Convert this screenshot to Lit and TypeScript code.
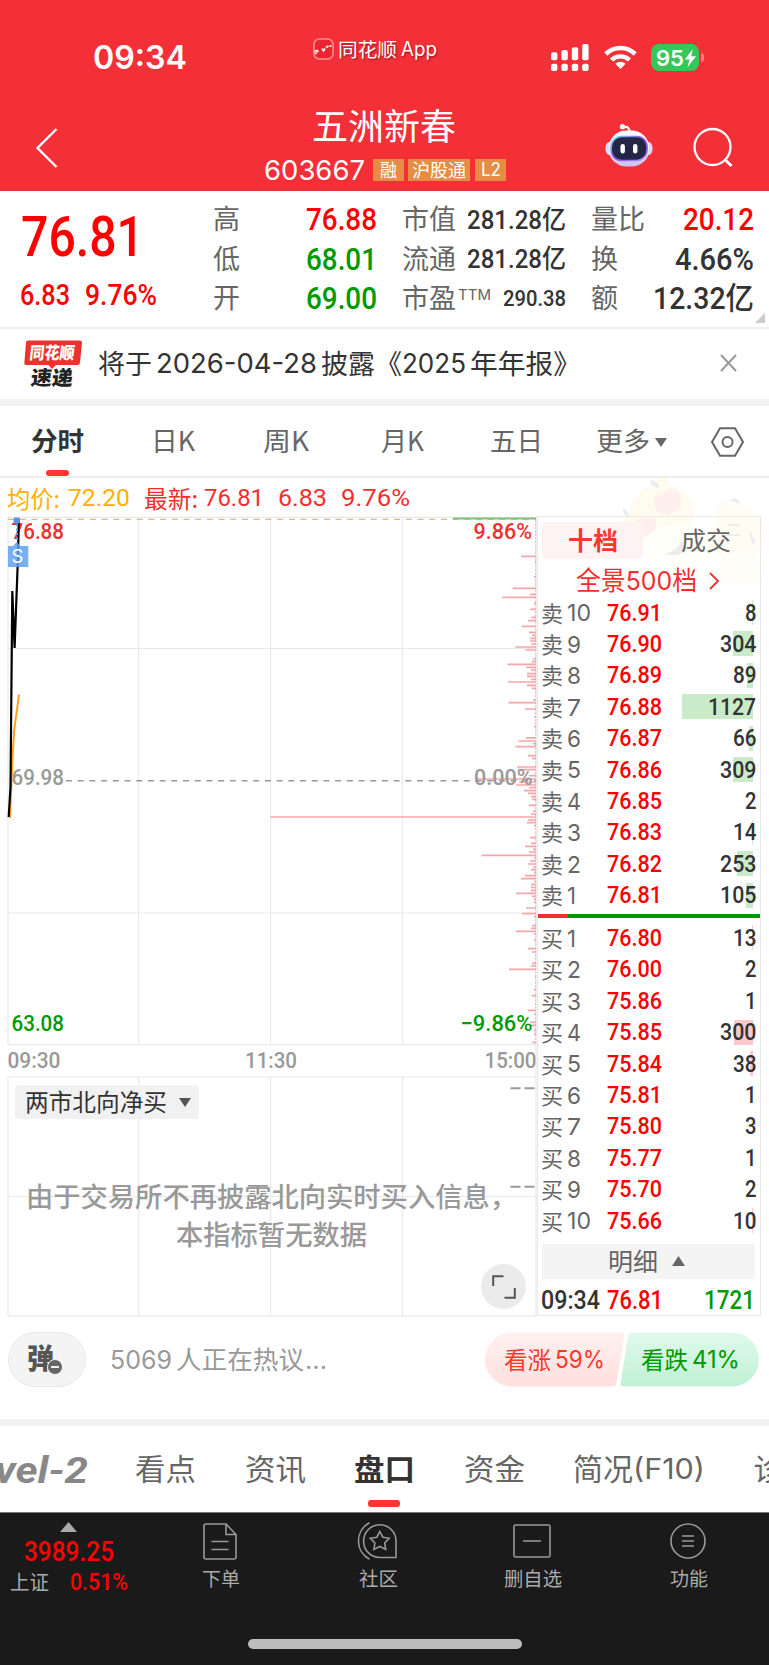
import { LitElement, html, svg, css } from "lit";
import { customElement, property } from "lit/decorators.js";

/** A single line of text condensed or widened to an exact width. */
@customElement("fit-text")
class FitText extends LitElement {
  @property({ type: Number }) w = 0;
  static styles = css`
    :host { display: inline-block; flex: none; line-height: 1; white-space: nowrap; text-align: left; }
    .in { display: inline-block; transform-origin: 0 50%; white-space: pre; }
  `;
  render() {
    return html`<span class="in"><slot></slot></span>`;
  }
  updated() {
    const s = this.renderRoot.querySelector(".in") as HTMLElement;
    this.style.width = `${this.w}px`;
    const n = s.getBoundingClientRect().width;
    if (n) s.style.transform = `scaleX(${this.w / n})`;
  }
}

const t = (text: string, w: number, cls = "cjk") =>
  html`<fit-text class=${cls} w=${w}>${text}</fit-text>`;

const sells: [string, string, string, number][] = [
  ["10", "76.91", "8", 1], ["9", "76.90", "304", 20], ["8", "76.89", "89", 6],
  ["7", "76.88", "1127", 71], ["6", "76.87", "66", 4], ["5", "76.86", "309", 20],
  ["4", "76.85", "2", 0], ["3", "76.83", "14", 1], ["2", "76.82", "253", 16],
  ["1", "76.81", "105", 7],
];
const buys: [string, string, string, number][] = [
  ["1", "76.80", "13", 1], ["2", "76.00", "2", 0], ["3", "75.86", "1", 0],
  ["4", "75.85", "300", 19], ["5", "75.84", "38", 2.5], ["6", "75.81", "1", 0],
  ["7", "75.80", "3", 0], ["8", "75.77", "1", 0], ["9", "75.70", "2", 0],
  ["10", "75.66", "10", 1],
];
const qtyWidth: Record<number, number> = { 1: 11.5, 2: 23.5, 3: 36.5, 4: 48 };

/* price-distribution bars: [y, left edge] */
const dist: [number, number][] = [
  [556.3,521],[561.7,535],[576.7,534],[588.3,512.7],[594.3,530],[597.3,502],[603.3,534],[609.3,530],
  [617.3,531.5],[620.7,528],[626.3,522],[632.3,529],[635.3,532],[638.3,530],[641,530],[644,531],
  [647,515.3],[650,525.5],[659,533],[661.7,532],[664.3,507.5],[667.3,526],[670,531],[673.7,527],
  [676.3,527],[679.3,531],[682,508],[685.3,527],[688.3,531.5],[700,533],[702.7,508.6],[709,525],
  [717,534],[726.5,534],[737.8,526],[741,518.5],[743.7,533],[746.7,515.5],[755.7,528],[758.3,532],[767,517],
  [769.7,518],[775.7,529],[779,475],[782,519],[785,516],[787.7,529],[790.7,524],[793.3,528],
  [796.7,531],[799.3,532],[805.3,529],[811,533],[814,531],[817,270.7],[820,528],[822.7,527],
  [825.7,534],[837.7,530],[843.3,531],[846.3,525],[849.3,533],[852,529],[855.3,481.5],[858,534],
  [861,530],[864,528],[867,533],[869.7,531],[872.6,534],[875.7,525],[878.7,521],[881.5,534],[884.3,531],
  [887.3,531],[890.3,531],[893.3,516],[896.3,532],[899.3,534],[902.3,534],[908,526],[913.7,522],
  [916.6,534],[925.7,532],[928.3,531],[931.3,516],[934,534],[940,534],[948.7,528],[952,532],[963.3,532],
  [966,531],[969.3,509],[977,535],[989.7,534],[995.7,531.5],[1010.3,528],[1014,534],[1022.3,530],
  [1025.3,531],[1030,534],[1034,534],[1042.5,532],
];

@customElement("app-root")
class AppRoot extends LitElement {
  static styles = css`
    :host { display: block; width: 769px; height: 1665px; overflow: hidden; background: #fff; color: #333;
      font-family: "Noto Sans CJK SC", sans-serif; line-height: 1; position: relative; }
    * { box-sizing: border-box; }
    svg { display: block; flex: none; overflow: visible; }
    .row { display: flex; align-items: center; }
    .num { font-family: Roboto, "Noto Sans CJK SC", sans-serif; font-weight: 500; }
    .sf { font-family: Inter, "Noto Sans CJK SC", sans-serif; }
    .cjk, .lab, .side { translate: 0 -.06em; }
    .red { color: #ff0000; }
    .grn { color: #009900; }

    .head { height: 191px; background: #f33038; color: #fff; }
    .status { height: 96px; padding: 22px 0 0 93px; }
    .time { font-size: 32.5px; font-weight: 600; margin-top: -1px; }
    .brandicon { margin: -21px 4px 0 126px; }
    .brandtxt { font-size: 19.5px; margin-top: -18px; text-shadow: 1px 1px 2px rgba(80,0,0,.6); }
    .sigs { margin-left: 114px; margin-top: -3px; }
    .wifi { margin-left: 15px; margin-top: -3px; }
    .batt { margin-left: 14px; margin-top: -3px; width: 48px; height: 27px; border-radius: 8px; background: #35c759;
      display: flex; align-items: center; padding-left: 5px; font-size: 22px; font-weight: 600; }
    .cap { margin: -3px 0 0 2px; width: 3px; height: 9px; border-radius: 0 3px 3px 0; background: #f8797d; }
    .nav { height: 95px; padding-left: 36px; display: grid; grid-template-columns: 228px 341px 88px 60px; align-items: start; }
    .title { font-size: 36px; margin: 12px 0 0 48px; display: block; }
    .sub { margin-top: 14px; height: 24px; }
    .code { font-size: 27px; }
    .tag { background: #e58c45; font-size: 18px; height: 22px; display: flex; align-items: center; justify-content: center; margin-left: 4px; }
    .tag.ta { width: 31px; margin-left: 8px; }
    .tag.tb { width: 62px; }
    .tag.tc { width: 31px; margin-left: 5px; }

    .quote { height: 138px; border-bottom: 2px solid #eee; display: grid;
      grid-template-columns: 193px 185px 189px 163px; padding-left: 20px; position: relative; }
    .big { font-size: 56px; margin: 18px 0 0 1px; display: block; }
    .chg { margin-top: 16px; gap: 15px; font-size: 29px; }
    .col { padding-top: 9px; }
    .col .row { height: 39.5px; justify-content: space-between; }
    .lab { font-size: 27px; color: #666; }
    .v { font-size: 31px; }
    .vm { font-size: 26px; }
    .vs { font-size: 21.5px; }
    .c2 { width: 164px; } .c3 { width: 163px; margin-left: 4px; } .c4 { width: 162px; margin-left: 4px; }
    .c3 .num, .c4 .num { margin-right: -1px; }
    .ttm { font-size: 15px; color: #666; align-self: flex-start; margin: 8px 9px 0 -2px; }
    .corner { position: absolute; right: 4px; bottom: 4px; }

    .news { height: 70px; padding-left: 24px; font-size: 27px; }
    .news .sf { translate: 0 -1px; }
    .logo { width: 60px; margin-right: 14px; margin-top: -1px; }
    .x { margin-top: -2px; }
    .band { height: 7px; background: #f3f3f3; }
    .tabs { height: 72px; border-bottom: 2px solid #eee; padding-left: 31px; font-size: 26.5px; color: #666; position: relative; }
    .tr { height: 72px; }
    .b { font-weight: 700; color: #333; translate: 0 -.06em; }
    .s1 { width: 67px; } .s2 { width: 68px; } .s3 { width: 72px; } .s4 { width: 66px; } .s5 { width: 53px; } .s6 { width: 5px; } .s7 { width: 44px; }
    .ul { position: absolute; background: #fb382f; border-radius: 3px; }
    .ul.u1 { left: 46px; top: 64px; width: 23px; height: 6px; }
    .info { height: 38px; padding: 3px 0 0 7px; font-size: 24px; color: #f0302f; }
    .or { color: #ffb000; }
    .g8 { width: 8px; } .g6 { width: 6px; } .g14 { width: 14px; }
    .n4 { font-family: Roboto, sans-serif; font-weight: 400; font-size: 23.5px; }
    .main { height: 801px; display: flex; padding-left: 8px; position: relative; }
    .chart { width: 529px; position: relative; }
    .ct { font-family: Roboto, sans-serif; font-weight: 500; font-size: 22.5px; }
    .drop { position: absolute; left: 7px; top: 569px; width: 184px; height: 34px; border-radius: 4px;
      background: rgba(240,240,240,.9); display: flex; align-items: center; padding-left: 10px; font-size: 24px; gap: 12px; }
    .msg { position: absolute; left: 0; top: 664px; width: 528px; height: 75px; display: grid; grid-template-rows: 37.5px 37.5px;
      align-items: center; font-size: 27px; font-weight: 500; color: #999; padding-left: 18px; }
    .msg .l2 { margin-left: 150px; }
    .msg fit-text { translate: 0 -.1em; }
    .full { position: absolute; left: 473px; top: 748px; width: 45px; height: 45px; border-radius: 50%; background: #ebebeb;
      display: flex; align-items: center; justify-content: center; }
    .book { width: 224px; height: 800px; border: 1.5px solid #e8e8e8; padding-left: 4px; position: relative; z-index: 1; }
    .btabs { height: 43px; padding-top: 5px; display: flex; font-size: 25px; }
    .btabs div { width: 101px; height: 37px; display: flex; align-items: center; justify-content: center; border-radius: 4px; }
    .btabs .on { background: #fff2f2; color: #fb382f; font-weight: 700; }
    .btabs .off { width: 112px; padding-left: 13px; color: #666; }
    .pan { height: 37px; color: #f0302f; font-size: 26px; padding: 4px 0 0 34px; gap: 12px; }
    .lv { height: 31.4px; display: flex; align-items: center; position: relative; }
    .side { font-size: 22px; width: 26px; color: #666; margin-left: -1px; }
    .no { width: 39.5px; color: #666; font-size: 23.5px; }
    .px { font-size: 24px; color: #f00; }
    .qty { margin-left: auto; margin-right: 4px; font-size: 24px; z-index: 1; }
    .bar { position: absolute; right: 7.5px; top: 3px; height: 25px; }
    .bs { background: #c9ebca; } .bb { background: #fcc8cb; }
    .split { height: 4px; margin: 3px 0 4.5px -4px; background: #090; }
    .split i { display: block; width: 30px; height: 4px; background: #f0302f; }
    .det { height: 35px; margin: 7.5px 5px 0 0; background: #f4f4f4; color: #666; font-size: 25px; padding-left: 66px; gap: 14px; }
    .last { height: 37px; padding-top: 6px; font-size: 25px; margin-left: -1px; }
    .last .k { margin-right: 7px; }
    .last .q { margin-left: auto; margin-right: 5px; }
    .art { position: absolute; left: 622px; top: -44px; }

    .talk { height: 102px; padding: 15px 0 0 8px; align-items: flex-start; }
    .pill { width: 78px; height: 55px; border-radius: 28px; background: #f4f4f4; border: 1.5px solid #e9e9e9;
      display: flex; align-items: center; padding-left: 18px; font-size: 28px; font-weight: 900; color: #555; position: relative; }
    .pill .cjk { translate: 0 -3px; }
    .pill svg { position: absolute; left: 38px; top: 26px; }
    .hot { height: 55px; margin-left: 24px; color: #999; font-size: 25.5px; display: flex; align-items: center; gap: 4px; }
    .dots { margin-left: -3px; }
    .vote { height: 56px; width: 276px; margin-left: auto; margin-right: 9px; position: relative; font-size: 24px; }
    .vote .bg { position: absolute; left: 0; top: 0; }
    .vt { position: relative; height: 55px; padding-left: 20px; }
    .up { color: #fb382f; } .vt.dn { color: #090; margin-left: 36px; padding-left: 0; }
    .gap { width: 4px; }

    .btm { height: 86px; font-size: 30px; color: #666; position: relative; overflow: hidden; }
    .lvl { font-family: Roboto, sans-serif; font-style: italic; font-weight: 700; color: #888; font-size: 37px; margin: 2px 47px 0 -5px; }
    .m { width: 48.5px; flex: none; }
    .f10 { font-size: 28.5px; }
    .ul.u2 { left: 368px; top: 74px; width: 32px; height: 7px; }
    .foot { height: 153px; background: #1a1a1a; color: #aaa; font-size: 19.5px; border-top: 1px solid #777; position: relative;
      display: grid; grid-template-columns: 144px 154px 160px 150px 161px; }
    .it { display: flex; flex-direction: column; align-items: center; height: 90px; }
    .ic { height: 56px; display: flex; align-items: center; padding-right: 2px; }
    .idx { padding-top: 9px; display: block; }
    .idx .n { font-size: 28px; display: block; margin: 6px 0 0 24px; }
    .idx .row { margin-top: 4px; padding-left: 10px; gap: 21px; font-size: 20px; }
    .idx .row .cjk { margin-top: 2px; }
    .idx .p { font-size: 24px; }
    .tri { margin-left: 60px; }
    .home { position: absolute; left: 248px; top: 126px; width: 274px; height: 10px; border-radius: 5px; background: #bcbcbc; }
  `;

  level(side: string, [n, p, q, b]: [string, string, string, number]) {
    const nw = n === "10" ? 24 : n === "1" ? 9 : 14;
    return html`<div class="lv">
      <span class="side">${side}</span>
      <span class="no">${t(n, nw, "sf")}</span>
      ${t(p, 55, "num px")}
      ${b ? html`<span class="bar ${side === "卖" ? "bs" : "bb"}" style="width:${b}px"></span>` : ""}
      ${t(q, qtyWidth[q.length], "num qty")}
    </div>`;
  }

  chartSvg() {
    const lab = (x: number, y: number, w: number, s: string, c: string) =>
      svg`<text class="ct" x=${x} y=${y} textLength=${w} lengthAdjust="spacingAndGlyphs" fill=${c}>${s}</text>`;
    return html`<svg width="529" height="801" viewBox="8 516 529 801">
      <g stroke="#e9e9e9" stroke-width="1.2" fill="none">
        <path d="M8 517.3H537M8 648.5H537M8 913H537M8 1044.7H537M8 1077H537M8 1196.5H537M8 1315.8H537"/>
        <path d="M8 517V1044.7M138.7 517V1044.7M270.5 517V1044.7M402.4 517V1044.7M536 517V1316M8 1077V1316M138.7 1077V1316M270.5 1077V1316M402.4 1077V1316"/>
      </g>
      <path d="M8 519.4H536" stroke="#ddb98a" stroke-width="1.3" stroke-dasharray="6 5.7"/>
      <path d="M453 518.5H536" stroke="#78c878" stroke-width="2"/>
      <path d="M66 780.8H536" stroke="#999" stroke-width="1.6" stroke-dasharray="6 5.7"/>
      <path d=${dist.map(([y, x]) => `M${x} ${y}H536`).join("")} stroke="#f7a5a8" stroke-width="1.7"/>
      <path d="M535.6 520V1044" stroke="#f7a5a8" stroke-width=".8" stroke-dasharray="2 1.5"/>
      <path d="M10 818L12.4 760L14.2 730L19 694.5" fill="none" stroke="#ffa11c" stroke-width="2"/>
      ${lab(11.5, 539, 52.5, "76.88", "#f0302f")}
      <path d="M8.7 817L10.5 787L12.3 591L14.6 648L18 556L18.8 519" fill="none" stroke="#000" stroke-width="2.2" stroke-linejoin="bevel"/>
      ${lab(11.5, 785, 52.5, "69.98", "#999")}
      ${lab(11.5, 1031, 52.5, "63.08", "#090")}
      ${lab(473.5, 539.3, 58.5, "9.86%", "#f0302f")}
      ${lab(474, 785, 58.5, "0.00%", "#999")}
      ${lab(460.5, 1031.3, 72, "−9.86%", "#090")}
      ${lab(7.5, 1068, 53, "09:30", "#999")}
      ${lab(245, 1068, 52, "11:30", "#999")}
      ${lab(484.5, 1068, 52, "15:00", "#999")}
      <rect x="13.5" y="517.5" width="6.5" height="6" rx="1.5" fill="#4f97ee"/>
      <path d="M17 524V542" stroke="#4f97ee" stroke-width="2" stroke-dasharray="2 2.5"/>
      <path d="M13 546L16.8 542L20.5 546H28.3V567H8V546Z" fill="#5fa1f0" fill-opacity=".85"/>
      <text x="11.6" y="563.3" font-family="Inter, sans-serif" font-size="18.5" fill="#fff">S</text>
      <path d="M510.5 1088.2H520.5M524.5 1088.2H534.5M510.5 1186.8H520.5M524.5 1186.8H534.5" stroke="#999" stroke-width="2"/>
    </svg>`;
  }

  render() {
    const tri = (w: number, h: number, c: string, up = false) => html`<svg width=${w} height=${h} viewBox="0 0 10 8" preserveAspectRatio="none">
      <path d=${up ? "M5 0L10 8H0Z" : "M0 0H10L5 8Z"} fill=${c}/></svg>`;
    return html`
      <div class="head">
        <div class="status row">
          ${t("09:34", 94, "sf time")}
          <svg class="brandicon" width="21" height="22" viewBox="0 0 21 22">
            <rect x="1" y="1" width="19" height="20" rx="5.5" fill="#e9262e" stroke="#f78f92" stroke-width="1.6"/>
            <path d="M1.5 13.5L4 12.5L5.5 14M9 10.5L10.5 13L12 10.5M13 9.5L15.5 8M16.5 8.5L18.5 7.5M2 15.5L4 15" fill="none" stroke="#fff" stroke-width="1.6"/>
          </svg>
          <span class="row brandtxt">${t("同花顺", 59)}<span class="gap"></span>${t("App", 36, "sf")}</span>
          <svg class="sigs" width="38" height="27" viewBox="0 0 38 27" fill="#fff">
            <rect x="0" y="8.3" width="6.4" height="8" rx="2"/><rect x="10.4" y="6" width="6.4" height="10.3" rx="2"/>
            <rect x="20.8" y="3.3" width="6.4" height="13" rx="2"/><rect x="31.2" y="0" width="6.4" height="16.3" rx="2"/>
            <rect x="0" y="19.7" width="6.4" height="7.2" rx="2"/><rect x="10.4" y="19.7" width="6.4" height="7.2" rx="2"/>
            <rect x="20.8" y="19.7" width="6.4" height="7.2" rx="2"/><rect x="31.2" y="19.7" width="6.4" height="7.2" rx="2"/>
          </svg>
          <svg class="wifi" width="33" height="25" viewBox="0 0 33 25">
            <path d="M1.8 9A21 21 0 0 1 31.2 9" fill="none" stroke="#fff" stroke-width="4.6"/>
            <path d="M7.6 15A12.8 12.8 0 0 1 25.4 15" fill="none" stroke="#fff" stroke-width="4.4"/>
            <path d="M11.4 18.8A7.3 7.3 0 0 1 21.6 18.8L16.5 24Z" fill="#fff"/>
          </svg>
          <div class="batt sf">${t("95", 28, "sf")}
            <svg width="13" height="18" viewBox="0 0 13 18"><path d="M8.8 0L.8 10.4H5.4L3.6 18L12 7.2H7.2Z" fill="#fff"/></svg>
          </div><div class="cap"></div>
        </div>
        <div class="nav">
          <svg width="22" height="72" viewBox="0 0 22 72"><path d="M20.5 33L1.5 52L20.5 71" fill="none" stroke="#fff" stroke-width="2.4"/></svg>
          <div>
            ${t("五洲新春", 144, "cjk title")}
            <div class="sub row">${t("603667", 101, "sf code")}
              <span class="tag ta">${t("融", 17)}</span><span class="tag tb">${t("沪股通", 54)}</span><span class="tag tc">${t("L2", 20, "sf")}</span></div>
          </div>
          <svg width="48" height="76" viewBox="0 -28 48 76">
            <defs>
              <linearGradient id="hd" x1="0" y1="0" x2="0" y2="1"><stop offset="0" stop-color="#fff"/><stop offset=".6" stop-color="#e9e6fa"/><stop offset="1" stop-color="#c9c2ee"/></linearGradient>
              <linearGradient id="rim" x1="0" y1="0" x2="1" y2="1"><stop offset="0" stop-color="#6be3f2"/><stop offset=".5" stop-color="#8a4be8"/><stop offset="1" stop-color="#b79bff"/></linearGradient>
            </defs>
            <path d="M18 3.5Q24 1 24.5 8" fill="none" stroke="#fff" stroke-width="2.2"/><circle cx="17.4" cy="2.7" r="2.6" fill="#f6f3ff"/>
            <ellipse cx="4" cy="24.5" rx="3.6" ry="6.5" fill="#dcd8f4"/><ellipse cx="44" cy="24.5" rx="3.6" ry="6.5" fill="#dcd8f4"/>
            <rect x="3.5" y="6.5" width="41" height="36" rx="18" fill="url(#hd)"/>
            <rect x="6.2" y="12.5" width="36" height="24" rx="10.5" fill="#232745" stroke="url(#rim)" stroke-width="1.6"/>
            <rect x="15.5" y="20" width="4.4" height="9.5" rx="2.2" fill="#fff"/><rect x="28" y="20" width="4.4" height="9.5" rx="2.2" fill="#fff"/>
          </svg>
          <svg width="40" height="72" viewBox="0 -31.5 40 72"><circle cx="19.5" cy="19.5" r="18" fill="none" stroke="#fff" stroke-width="2.3"/><path d="M31.5 31.5L38.5 38.5" stroke="#fff" stroke-width="2.8"/></svg>
        </div>
      </div>

      <div class="quote">
        <div>${t("76.81", 123, "num red big")}
          <div class="chg row">${t("6.83", 50, "num red")}${t("9.76%", 72, "num red")}</div></div>
        <div class="col c2">
          <div class="row"><span class="lab">高</span>${t("76.88", 71, "num v red")}</div>
          <div class="row"><span class="lab">低</span>${t("68.01", 71, "num v grn")}</div>
          <div class="row"><span class="lab">开</span>${t("69.00", 71, "num v grn")}</div>
        </div>
        <div class="col c3">
          <div class="row"><span class="lab">市值</span>${t("281.28亿", 99, "num vm")}</div>
          <div class="row"><span class="lab">流通</span>${t("281.28亿", 99, "num vm")}</div>
          <div class="row"><span class="lab">市盈</span>${t("TTM", 33, "sf ttm")}${t("290.38", 63, "num vs")}</div>
        </div>
        <div class="col c4">
          <div class="row"><span class="lab">量比</span>${t("20.12", 71, "num v red")}</div>
          <div class="row"><span class="lab">换</span>${t("4.66%", 79, "num v")}</div>
          <div class="row"><span class="lab">额</span>${t("12.32亿", 101, "num v")}</div>
        </div>
        <svg class="corner" width="10" height="10" viewBox="0 0 10 10"><path d="M10 0V10H0Z" fill="#ccc"/></svg>
      </div>

      <div class="news row">
        <svg class="logo" width="60" height="50" viewBox="0 0 60 50">
          <path d="M4 1.5H56Q58.2 1.5 58 4L56 23.5Q55.7 26 53.5 26H32L28 30L24.5 26H2.5Q0 26 .4 23.5L2 3.5Q2.2 1.5 4 1.5Z" fill="#e8332f"/>
          <text x="7" y="19.5" transform="skewX(-6)" textLength="45" lengthAdjust="spacingAndGlyphs" font-size="17" font-weight="900" fill="#fff">同花顺</text>
          <text x="11" y="45.8" transform="skewX(-6)" textLength="42" lengthAdjust="spacingAndGlyphs" font-size="20" font-weight="900" fill="#222">速递</text>
        </svg>
        ${t("将于", 54)}<span class="gap"></span>${t("2026-04-28", 161, "sf")}<span class="gap"></span>${t("披露《", 81)}${t("2025", 64, "sf")}<span class="gap"></span>${t("年年报》", 111)}
        <svg class="x" width="160" height="16" viewBox="-142 0 160 16"><path d="M0 0L15 16M15 0L0 16" stroke="#999" stroke-width="2" transform="translate(-2 0)"/></svg>
      </div>
      <div class="band"></div>
      <div class="tabs">
        <div class="row tr">
          ${t("分时", 53, "b")}<i class="s1"></i>${t("日K", 44)}<i class="s2"></i>${t("周K", 46)}<i class="s3"></i>${t("月K", 43)}<i class="s4"></i>${t("五日", 53)}<i class="s5"></i>${t("更多", 54)}<i class="s6"></i>${tri(12, 9, "#666")}<i class="s7"></i>
          <svg width="33" height="30" viewBox="0 0 33 30"><path d="M9 1.2H24L32 15L24 28.8H9L1 15Z" fill="none" stroke="#666" stroke-width="2"/><circle cx="16.5" cy="15" r="5" fill="none" stroke="#666" stroke-width="2"/></svg>
        </div>
        <div class="ul u1"></div>
      </div>
      <div class="info row">
        ${t("均价:", 53, "cjk or")}<i class="g8"></i>${t("72.20", 62, "n4 or")}<i class="g14"></i>${t("最新:", 54)}<i class="g6"></i>${t("76.81", 60, "n4")}<i class="g14"></i>${t("6.83", 49, "n4")}<i class="g14"></i>${t("9.76%", 69, "n4")}
      </div>

      <div class="main">
        <svg class="art" width="147" height="120" viewBox="0 0 147 120">
          <g opacity=".08">
            <ellipse cx="40" cy="42" rx="32" ry="30" fill="#ffd640"/><path d="M-2 52L10 36L22 60Z" fill="#ffd640"/>
            <path d="M26 16L44 2L48 18Z" fill="#ffd640"/>
            <path d="M33 34Q28 20 40 24Q50 10 58 22Q62 38 46 43Q34 42 33 34Z" fill="#ff4a40"/>
            <path d="M12 52Q14 44 24 47Q36 42 34 56Q28 66 18 64Z" fill="#ff4a40"/>
            <ellipse cx="56" cy="74" rx="34" ry="22" fill="#fff3b0"/><ellipse cx="116" cy="62" rx="26" ry="30" fill="#ffe680"/>
            <ellipse cx="118" cy="98" rx="24" ry="16" fill="#fff0b0"/><path d="M92 42L102 26L112 44Z" fill="#ffe680"/>
            <path d="M28 8Q37 9 37 16L30 14ZM0 36Q8 39 7 46L2 42ZM108 28Q117 24 117 32ZM44 82Q56 78 60 68L66 78Q54 86 44 82ZM106 52H118V54H106ZM102 62H118V64H102ZM127 58L134 70L130 72Z" fill="#222"/>
          </g>
        </svg>
        <div class="chart">
          ${this.chartSvg()}
          <div class="drop">${t("两市北向净买", 142)}${tri(12, 9, "#555")}</div>
          <div class="msg">${t("由于交易所不再披露北向实时买入信息，", 491)}${t("本指标暂无数据", 191, "l2")}</div>
          <div class="full"><svg width="24" height="24" viewBox="0 0 24 24"><path d="M1.2 11V1.2H11.5M22.8 13V22.8H12.5" fill="none" stroke="#555" stroke-width="2"/></svg></div>
        </div>
        <div class="book">
          <div class="btabs"><div class="on">${t("十档", 50)}</div><div class="off">${t("成交", 50)}</div></div>
          <div class="pan row">${t("全景500档", 121, "sf")}<svg width="10" height="18" viewBox="0 0 10 18"><path d="M1 1L9 9L1 17" fill="none" stroke="#f0302f" stroke-width="1.8"/></svg></div>
          ${sells.map((r) => this.level("卖", r))}
          <div class="split"><i></i></div>
          ${buys.map((r) => this.level("买", r))}
          <div class="det row">${t("明细", 50)}${tri(13, 10, "#666", true)}</div>
          <div class="last row">${t("09:34", 59, "num k")}${t("76.81", 56, "num red")}${t("1721", 51, "num grn q")}</div>
        </div>
      </div>

      <div class="talk row">
        <div class="pill">${t("弹", 27)}<svg width="16" height="16" viewBox="0 0 16 16"><circle cx="8" cy="8" r="7.5" fill="#666" stroke="#f4f4f4"/><path d="M4 8H12" stroke="#fff" stroke-width="1.8"/></svg></div>
        <div class="hot">${t("5069", 62, "sf")}${t("人正在热议", 128)}${t("...", 22, "sf dots")}</div>
        <div class="vote row">
          <svg class="bg" width="276" height="56" viewBox="0 0 276 56">
            <defs>
              <linearGradient id="r" x1="0" y1="0" x2="0" y2="1"><stop offset="0" stop-color="#fff0ef"/><stop offset="1" stop-color="#ffe0dd"/></linearGradient>
              <linearGradient id="g" x1="0" y1="0" x2="0" y2="1"><stop offset="0" stop-color="#e0faec"/><stop offset="1" stop-color="#bff1d3"/></linearGradient>
            </defs>
            <path d="M28 .5H137Q141 .5 140.3 4L132.5 51Q131.8 54.5 128 54.5H28A27 27 0 0 1 28 .5Z" fill="url(#r)"/>
            <path d="M148 .5H248A27 27 0 0 1 248 54.5H140Q136 54.5 136.7 51L144 4Q144.6 .5 148 .5Z" fill="url(#g)"/>
          </svg>
          <div class="vt row up">${t("看涨", 47)}<span class="gap"></span>${t("59%", 50, "sf")}</div>
          <div class="vt row dn">${t("看跌", 47)}<span class="gap"></span>${t("41%", 48, "sf")}</div>
        </div>
      </div>
      <div class="band"></div>
      <div class="btm row">
        ${t("vel-2", 93, "lvl")}${t("看点", 61)}<i class="m"></i>${t("资讯", 61)}<i class="m"></i>${t("盘口", 61, "b")}<i class="m"></i>${t("资金", 61)}<i class="m"></i>${t("简况", 60)}${t("(F10)", 72, "sf f10")}<i class="m"></i>${t("诊", 30)}
        <div class="ul u2"></div>
      </div>
      <div class="foot">
        <div class="idx"><div class="tri">${tri(17, 10, "#aaa", true)}</div>
          ${t("3989.25", 90, "num n red")}
          <div class="row">${t("上证", 39)}${t("0.51%", 58, "num p red")}</div></div>
        <div class="it"><div class="ic"><svg width="34" height="37" viewBox="0 0 34 37" fill="none" stroke="#999" stroke-width="1.6"><path d="M3 1H23L33 11.5V34Q33 36 31 36H3Q1 36 1 34V3Q1 1 3 1ZM23 1V11.5H33M8.5 18.5H25.5M8.5 26.5H25.5"/></svg></div>${t("下单", 38)}</div>
        <div class="it"><div class="ic"><svg width="40" height="38" viewBox="0 0 40 38" fill="none" stroke="#999" stroke-width="1.6"><path d="M12.5 .8A20.5 20.5 0 0 0 12.5 37.2"/><path d="M39 35.5V19A16.2 16.2 0 0 0 6.6 19A16.2 16.2 0 0 0 22.8 35.5Z"/><path d="M22.8 9.5L25.8 15.2L32.2 16.2L27.7 20.9L28.7 27.4L22.8 24.5L16.9 27.4L17.9 20.9L13.4 16.2L19.8 15.2Z"/></svg></div>${t("社区", 39)}</div>
        <div class="it"><div class="ic"><svg width="38" height="34" viewBox="0 0 38 34" fill="none" stroke="#999" stroke-width="1.6"><rect x="1" y="1" width="36" height="32" rx="1.5"/><path d="M10 17H28"/></svg></div>${t("删自选", 58)}</div>
        <div class="it"><div class="ic"><svg width="36" height="36" viewBox="0 0 36 36" fill="none" stroke="#999" stroke-width="1.6"><circle cx="18" cy="18" r="17"/><path d="M12 13H24M12 18H24M12 23H24"/></svg></div>${t("功能", 38)}</div>
        <div class="home"></div>
      </div>
    `;
  }
}
